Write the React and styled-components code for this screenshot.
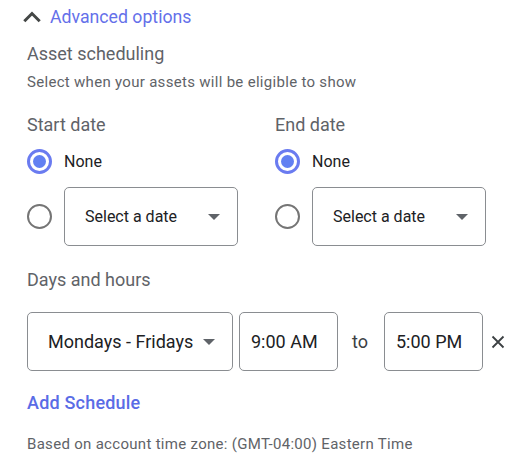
import React from "react";
import styled, { createGlobalStyle } from "styled-components";

const Global = createGlobalStyle`
  html, body { margin: 0; padding: 0; background: #fff; }
  body { font-family: Roboto, "Noto Sans", Arial, sans-serif; color: #202124; }
`;

const Page = styled.div`
  width: 516px;
  height: 462px;
  box-sizing: border-box;
  padding-left: 27px;
  display: flex;
  flex-direction: column;
  overflow: hidden;
`;

const Toggle = styled.div`
  height: 34px;
  margin-left: -4px;
  display: flex;
  align-items: center;
  gap: 9px;
  font-size: 17.7px;
  color: #6470ea;
  cursor: pointer;
`;

const Title = styled.div`
  margin-top: ${(p) => p.$mt || 0}px;
  font-size: 18px;
  line-height: 24px;
  color: #5f6368;
`;

const Hint = styled.div`
  margin-top: ${(p) => p.$mt || 0}px;
  font-size: 15px;
  line-height: 20px;
  letter-spacing: 0.3px;
  color: #5f6368;
`;

const Columns = styled.div`
  margin-top: 21px;
  display: flex;
`;

const Column = styled.div`
  width: ${(p) => p.$w}px;
  flex: none;
  display: flex;
  flex-direction: column;
`;

const RadioRow = styled.div`
  display: flex;
  align-items: center;
  gap: 12px;
  margin-top: ${(p) => p.$mt || 0}px;
  height: ${(p) => p.$h || 28}px;
  font-size: 16px;
  color: #202124;
`;

const Radio = styled.span`
  box-sizing: border-box;
  width: 25px;
  height: 25px;
  border-radius: 50%;
  border: ${(p) => (p.$on ? "3px solid #6a7bf0" : "2.5px solid #757575")};
  display: flex;
  align-items: center;
  justify-content: center;
  flex: none;
  &::after {
    content: "";
    display: ${(p) => (p.$on ? "block" : "none")};
    width: 13px;
    height: 13px;
    border-radius: 50%;
    background: #6280f2;
  }
`;

const Box = styled.div`
  box-sizing: border-box;
  width: ${(p) => p.$w}px;
  height: 59px;
  border: 1px solid #8a8d91;
  border-radius: 5px;
  display: flex;
  align-items: center;
  justify-content: ${(p) => (p.$select ? "space-between" : "flex-start")};
  padding: ${(p) => (p.$select ? "0 17px 0 20px" : "0 0 0 11px")};
  font-size: ${(p) => p.$fs || 18}px;
  color: #202124;
  flex: none;
`;

const Arrow = styled.span`
  width: 0;
  height: 0;
  border-left: 6px solid transparent;
  border-right: 6px solid transparent;
  border-top: 6px solid #5f6368;
`;

const ScheduleRow = styled.div`
  margin-top: 20px;
  display: flex;
  align-items: center;
`;

const To = styled.span`
  margin: 0 16px 0 14px;
  font-size: 18px;
  color: #3c4043;
`;

const Close = styled.span`
  margin-left: 8px;
  display: flex;
  align-items: center;
`;

const LinkButton = styled.div`
  margin-top: 20px;
  font-size: 18px;
  line-height: 24px;
  font-weight: 500;
  letter-spacing: 0.2px;
  color: #5a6ce6;
  cursor: pointer;
`;

function DateColumn({ label, width }) {
  return (
    <Column $w={width}>
      <Title>{label}</Title>
      <RadioRow $mt={10}>
        <Radio $on />
        <span>None</span>
      </RadioRow>
      <RadioRow $mt={12} $h={59}>
        <Radio />
        <Box $w={174} $select $fs={16}>
          <span>Select a date</span>
          <Arrow />
        </Box>
      </RadioRow>
    </Column>
  );
}

export default function App() {
  return (
    <>
      <Global />
      <Page>
        <Toggle>
          <svg width="18" height="12" viewBox="0 0 18 12">
            <path d="M1.3 10.2 L9 2.5 L16.7 10.2" fill="none" stroke="#444746" strokeWidth="3" />
          </svg>
          <span>Advanced options</span>
        </Toggle>
        <Title $mt={8}>Asset scheduling</Title>
        <Hint $mt={6}>Select when your assets will be eligible to show</Hint>
        <Columns>
          <DateColumn label="Start date" width={248} />
          <DateColumn label="End date" width={214} />
        </Columns>
        <Title $mt={22}>Days and hours</Title>
        <ScheduleRow>
          <Box $w={206} $select>
            <span>Mondays - Fridays</span>
            <Arrow />
          </Box>
          <Box $w={99} style={{ marginLeft: 6 }}>9:00 AM</Box>
          <To>to</To>
          <Box $w={99}>5:00 PM</Box>
          <Close>
            <svg width="14" height="14" viewBox="0 0 14 14">
              <path d="M1.5 1.5 L12.5 12.5 M12.5 1.5 L1.5 12.5" stroke="#3c4043" strokeWidth="1.8" />
            </svg>
          </Close>
        </ScheduleRow>
        <LinkButton>Add Schedule</LinkButton>
        <Hint $mt={19}>Based on account time zone: (GMT-04:00) Eastern Time</Hint>
      </Page>
    </>
  );
}
